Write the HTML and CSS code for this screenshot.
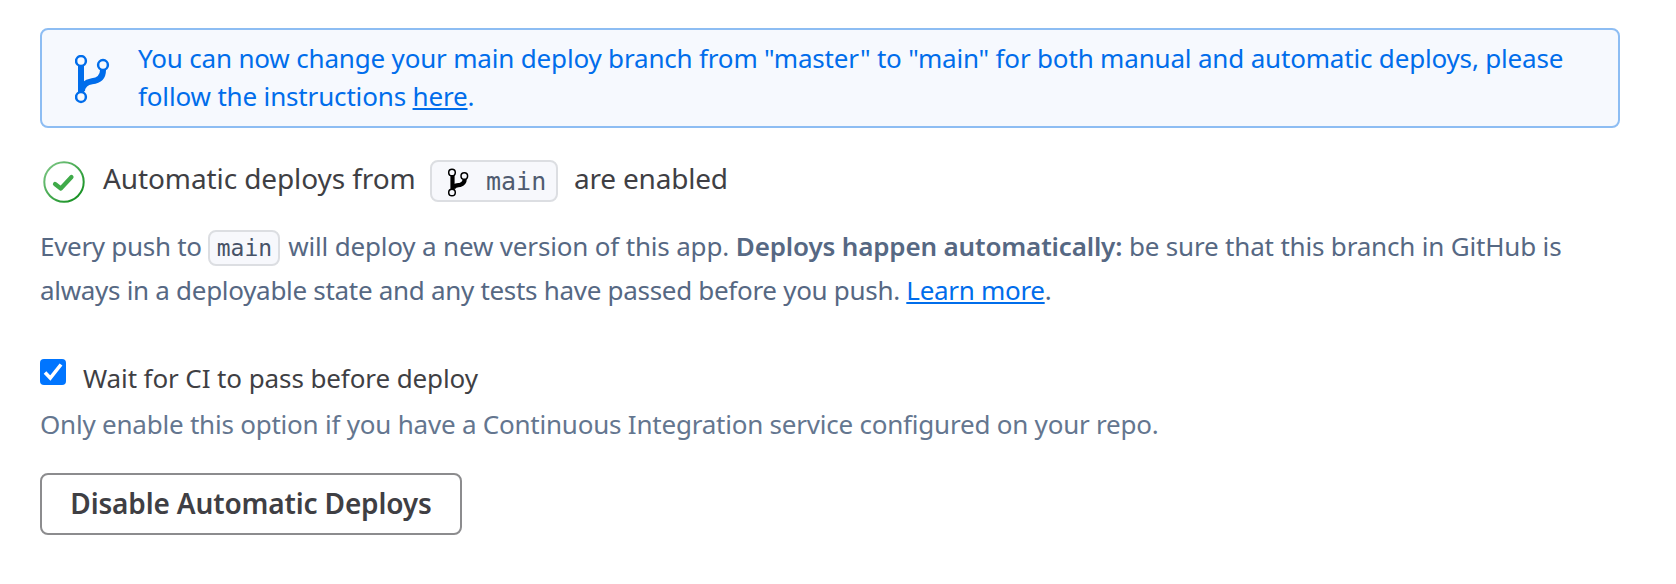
FILE: index.html
```html
<!DOCTYPE html>
<html lang="en">
<head>
<meta charset="utf-8">
<title>Automatic deploys</title>
<link rel="stylesheet" href="styles.css">
</head>
<body>
<main class="page">
  <div class="alert">
    <svg class="alert-icon" viewBox="0 0 35 49" fill="none" stroke="currentColor">
      <path d="M6 11V38M7 36C7.500 29 12 27 17 26.300C24 25.500 28 22 28 15" stroke-width="6"/>
      <g fill="#f6f9fe" stroke-width="2.500"><circle cx="6" cy="6" r="4.900"/><circle cx="28" cy="10" r="4.900"/><circle cx="6" cy="42" r="4.900"/></g>
    </svg>
    <p class="alert-text"><span class="alert-first">You can now change your main deploy branch from "master" to "main" for both manual and automatic deploys, please</span> <span class="alert-second">follow the instructions <a class="link" href="#">here</a>.</span></p>
  </div>

  <h2 class="status">
    <svg class="status-icon" viewBox="0 0 42 42" fill="none">
      <defs><linearGradient id="ring" x1="0" y1="0" x2="1" y2="1"><stop offset="0" stop-color="#82c98a"/><stop offset="1" stop-color="#098a16"/></linearGradient></defs>
      <circle cx="21" cy="21" r="19.700" stroke="url(#ring)" stroke-width="2"/>
      <path d="M12 23L17.800 27.500L28.500 16" stroke="#3faa49" stroke-width="4.200" stroke-linecap="round" stroke-linejoin="round"/>
    </svg>
    <span class="status-from">Automatic deploys from</span>
    <span class="branch">
      <svg class="branch-icon" viewBox="0 0 21 29" fill="none" stroke="currentColor">
        <path d="M4.500 7V22M5.500 20.500C6 17 9 17.500 12 17C15 16 16.700 14 16.700 11" stroke-width="4.200"/>
        <g fill="#f7f8fc" stroke-width="1.500"><circle cx="4" cy="4.500" r="3.300"/><circle cx="16.300" cy="8" r="3.300"/><circle cx="4" cy="24.500" r="3.300"/></g>
      </svg>
      <span>main</span>
    </span>
    <span class="status-enabled">are enabled</span>
  </h2>

  <p class="description"><span class="push">Every push to</span> <code class="code">main</code> <span class="deploy">will deploy a new version of this app.</span> <strong class="strong">Deploys happen automatically:</strong> <span class="sure">be sure that this branch in GitHub is</span> <span class="state">always in a deployable state and any tests have passed before you push. <a class="link" href="#">Learn more</a>.</span></p>

  <label class="option">
    <input class="option-input" type="checkbox" checked>
    <span class="checkbox"><svg class="check" viewBox="0 0 26 26" fill="none"><path d="M5 13.500L10.300 19L21 5.500" stroke="#fff" stroke-width="3.600"/></svg></span>
    <span class="option-label">Wait for CI to pass before deploy</span>
  </label>
  <p class="note">Only enable this option if you have a Continuous Integration service configured on your repo.</p>
  <button class="button" type="button">Disable Automatic Deploys</button>
</main>
</body>
</html>
```
FILE: styles.css
```css
* { box-sizing: border-box; }
body { margin: 0; background: #fff; font-family: "Noto Sans", sans-serif; font-size: 26px; color: #3f3f44; }
p, h2 { margin: 0; }
.page { padding: 28px 56px 0 40px; }
.link { color: #006deb; text-decoration: underline; text-decoration-thickness: 2px; text-underline-offset: 2px; }
.alert { display: flex; height: 100px; padding: 9px 0 0 33px; border: 2px solid #8dbdf3; border-radius: 8px; background: #f6f9fe; color: #006deb; }
.alert-icon { width: 35px; height: 49px; margin: 16px 28px 0 0; }
.alert-text { line-height: 38px; white-space: nowrap; }
.alert-first, .alert-second { display: block; }
.alert-first { letter-spacing: -0.178px; }
.alert-second { letter-spacing: -0.16px; }
.status { display: flex; height: 42px; margin-top: 32px; font-size: 28px; font-weight: 400; line-height: 37px; white-space: nowrap; }
.status-icon { width: 42px; height: 42px; margin: 1px 0 0 3px; }
.status-from { width: 327px; margin-left: 18px; letter-spacing: -0.1px; }
.branch { display: flex; width: 128px; height: 42px; padding-left: 16px; border: 2px solid #dcdee2; border-radius: 8px; background: #f7f8fc; color: #000; font-family: "DejaVu Sans Mono", monospace; font-size: 25px; line-height: 39px; }
.branch-icon { width: 21px; height: 29px; margin: 6px 17px 0 0; }
.branch span { color: #4f5b70; }
.status-enabled { margin-left: 16px; letter-spacing: -0.2px; }
.description { margin-top: 22px; color: #566883; line-height: 44px; white-space: nowrap; }
.push { letter-spacing: -0.3px; }
.code { display: inline-block; width: 72px; height: 36px; margin-right: 1px; border: 2px solid #dcdee2; border-radius: 8px; background: #f7f8fc; color: #465267; font-family: "DejaVu Sans Mono", monospace; font-size: 23px; line-height: 32px; text-align: center; vertical-align: middle; position: relative; top: -1px; }
.deploy { letter-spacing: -0.17px; }
.strong { font-weight: 600; letter-spacing: -0.16px; }
.sure { letter-spacing: -0.18px; }
.state { display: block; letter-spacing: -0.3px; }
.option { display: flex; height: 46px; margin-top: 47px; }
.option-input { position: absolute; opacity: 0; }
.checkbox { width: 26px; height: 26px; border-radius: 4px; background: #0075ff; }
.check { display: block; }
.option-label { margin-left: 17px; line-height: 38px; letter-spacing: -0.1px; white-space: nowrap; }
.note { color: #64768f; line-height: 38px; letter-spacing: -0.22px; white-space: nowrap; }
.button { display: block; width: 422px; height: 62px; margin-top: 30px; padding: 0 0 3px; border: 2px solid #8c8c8e; border-radius: 8px; background: #fff; color: #3f3f44; font: 600 28px/50px "Noto Sans", sans-serif; letter-spacing: -0.15px; white-space: nowrap; }
```
